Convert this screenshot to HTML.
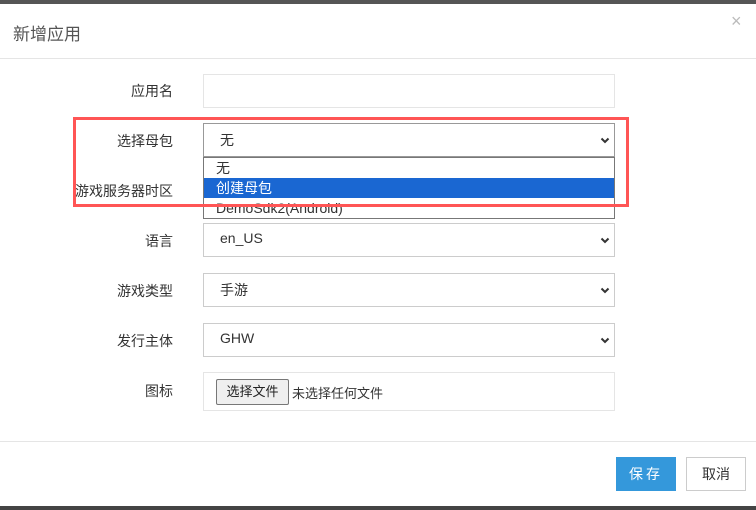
<!DOCTYPE html><html><head><meta charset="utf-8"><style>
body{margin:0;width:756px;height:510px;overflow:hidden;background:#fff;font-family:"Liberation Sans","Noto Sans CJK SC",sans-serif;font-size:14px;color:#333;position:relative}
.a{position:absolute}
.inp{position:absolute;left:203px;width:412px;height:34px;border:1px solid #e5e5e5;box-sizing:border-box}
.sel{border-color:#ccc}
.lab{position:absolute;right:583px;font-size:14px;color:#333;white-space:nowrap}
.val{position:absolute;left:16px;top:6px}
.chev{position:absolute;right:4px;top:11px}
</style></head><body>
<div class="a" style="left:0;top:0;width:756px;height:4px;background:#555"></div>
<div class="a" style="left:0;top:506px;width:756px;height:4px;background:#444"></div>
<div class="a" style="left:13px;top:20px;font-size:17px;color:#555">新增应用</div>
<div class="a" style="left:731px;top:11px;font-size:18px;color:#bbb">×</div>
<div class="a" style="left:0;top:58px;width:756px;height:1px;background:#e5e5e5"></div>

<div class="lab" style="top:81px">应用名</div>
<div class="inp" style="top:74px"></div>

<div class="lab" style="top:131px">选择母包</div>
<div class="inp sel" style="top:123px;border-color:#999"><span class="val">无</span><svg class="chev" width="10" height="10" viewBox="0 0 10 10"><path d="M1.5 3.5L5 7L8.5 3.5" stroke="#333" stroke-width="2" fill="none"/></svg></div>

<div class="lab" style="top:181px">游戏服务器时区</div>

<div class="lab" style="top:231px">语言</div>
<div class="inp sel" style="top:223px"><span class="val">en_US</span><svg class="chev" width="10" height="10" viewBox="0 0 10 10"><path d="M1.5 3.5L5 7L8.5 3.5" stroke="#333" stroke-width="2" fill="none"/></svg></div>

<div class="lab" style="top:281px">游戏类型</div>
<div class="inp sel" style="top:273px"><span class="val">手游</span><svg class="chev" width="10" height="10" viewBox="0 0 10 10"><path d="M1.5 3.5L5 7L8.5 3.5" stroke="#333" stroke-width="2" fill="none"/></svg></div>

<div class="lab" style="top:331px">发行主体</div>
<div class="inp sel" style="top:323px"><span class="val">GHW</span><svg class="chev" width="10" height="10" viewBox="0 0 10 10"><path d="M1.5 3.5L5 7L8.5 3.5" stroke="#333" stroke-width="2" fill="none"/></svg></div>

<div class="lab" style="top:381px">图标</div>
<div class="inp" style="top:372px;height:39px">
<div class="a" style="left:12px;top:6px;width:73px;height:26px;border:1px solid #777;border-radius:2px;background:#efefef;box-sizing:border-box;font-size:13px;text-align:center;line-height:24px;color:#222">选择文件</div>
<div class="a" style="left:88px;top:10px;font-size:13px;color:#333">未选择任何文件</div></div>

<div class="a" style="left:203px;top:157px;width:412px;height:62px;border:1px solid #777;box-sizing:border-box;background:#fff;font-size:14px">
<div style="height:20px;line-height:20px;padding-left:12px;color:#333">无</div>
<div style="height:20px;line-height:20px;padding-left:12px;background:#1a67d2;color:#fff">创建母包</div>
<div style="height:20px;line-height:20px;padding-left:12px;color:#333">DemoSdk2(Android)</div></div>

<div class="a" style="left:73px;top:117px;width:556px;height:90px;border:3px solid #f55;box-sizing:border-box"></div>

<div class="a" style="left:0;top:441px;width:756px;height:1px;background:#e5e5e5"></div>
<div class="a" style="left:616px;top:457px;width:60px;height:34px;background:#3498db;color:#fff;text-align:center;line-height:34px;letter-spacing:3px">保存</div>
<div class="a" style="left:686px;top:457px;width:60px;height:34px;border:1px solid #ccc;box-sizing:border-box;text-align:center;line-height:32px">取消</div>
</body></html>
